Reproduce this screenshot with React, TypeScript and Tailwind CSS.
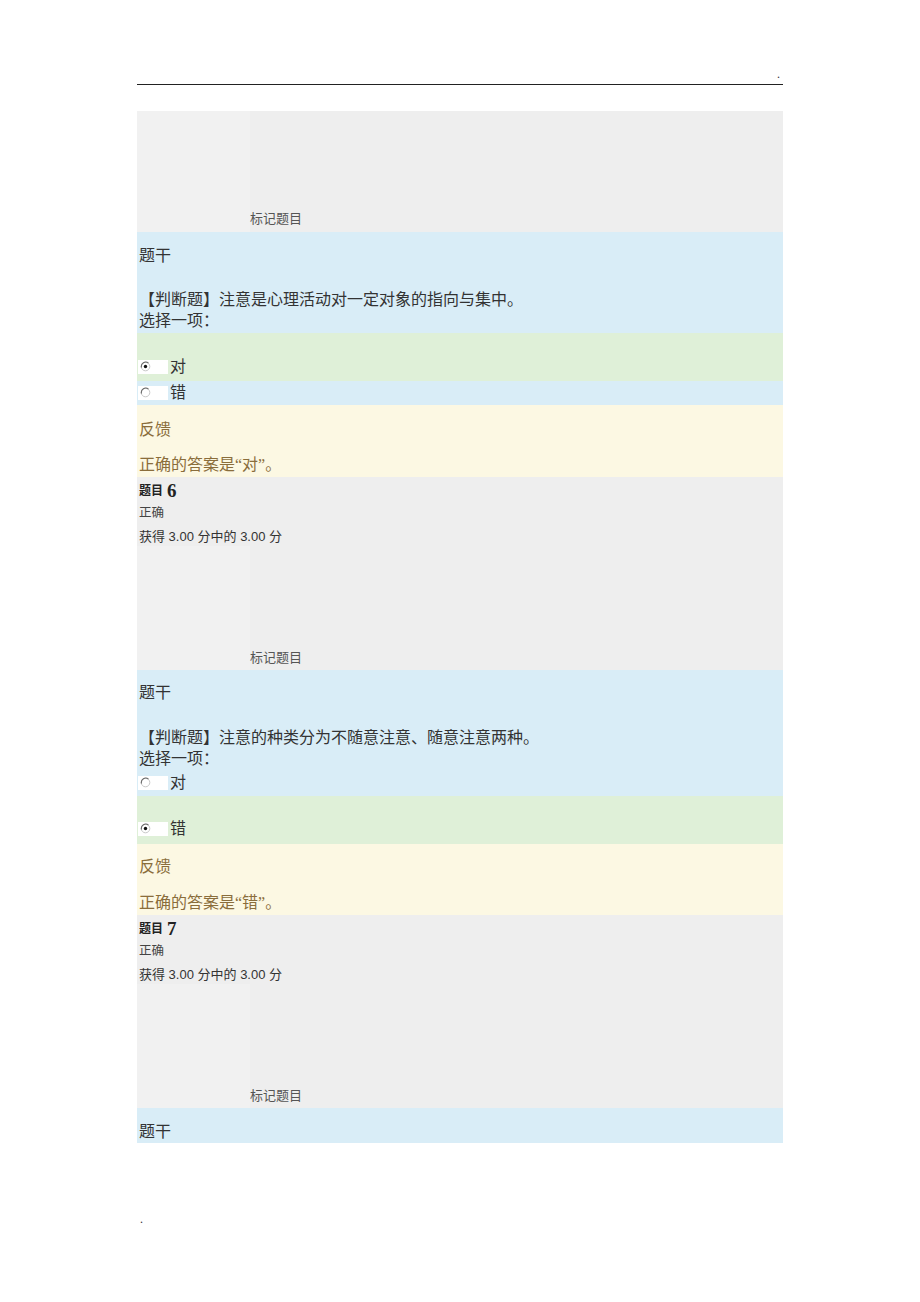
import React from "react";

const serif = "font-['Liberation_Serif','Noto_Sans_CJK_SC',serif]";
const sans = "font-['Liberation_Sans','Noto_Sans_CJK_SC',sans-serif]";

function Radio({ checked }: { checked?: boolean }) {
  return (
    <span className="inline-flex h-[14px] w-[30px] items-start bg-white pl-[2px] pt-[1px]">
      <svg width="11" height="11" viewBox="0 0 11 11">
        <circle cx="5.5" cy="5.5" r="4.3" fill="#fff" stroke="#c9c9c9" strokeWidth="1" />
        <path d="M1.5 6.5 A4.3 4.3 0 0 1 8.5 2.2" fill="none" stroke="#6b6b6b" strokeWidth="1.1" />
        {checked && <circle cx="5.5" cy="5.5" r="1.7" fill="#111" />}
      </svg>
    </span>
  );
}

function Option({ label, checked }: { label: string; checked?: boolean }) {
  return (
    <div className="flex h-[20px] items-center">
      <Radio checked={checked} />
      <span className="ml-[2px] text-[16px] leading-[20px] text-[#333]">{label}</span>
    </div>
  );
}

function MarkRow() {
  return (
    <div className="flex h-[124px]">
      <div className="w-[113px] bg-[#f1f1f1]" />
      <div className="flex flex-1 items-end pb-[4px]">
        <span className={`${sans} text-[13px] leading-[16px] text-[#555]`}>标记题目</span>
      </div>
    </div>
  );
}

function Info({ num }: { num: string }) {
  return (
    <div className="h-[69px] pl-[2px] pt-[4px]">
      <div className="flex h-[20px] items-center">
        <span className={`${sans} text-[12px] font-bold text-[#222]`}>题目</span>
        <span className={`${serif} ml-[4px] text-[19px] font-bold leading-[20px] text-[#222]`}>{num}</span>
      </div>
      <div className="mt-[3px] h-[18px] text-[12.5px] leading-[18px] text-[#444]">正确</div>
      <div className={`${sans} mt-[6px] h-[18px] text-[13px] leading-[18px] text-[#333]`}>
        获得 3.00 分中的 3.00 分
      </div>
    </div>
  );
}

export default function App() {
  return (
    <div className={`${serif} h-[1302px] w-[920px] bg-white`}>
      <div className="ml-[137px] w-[646px]">
        <div className="flex h-[85px] items-end justify-end border-b border-[#222] pb-[4px] pr-[3px]">
          <span className="text-[12px] leading-[12px] text-[#333]">.</span>
        </div>

        <div className="mt-[26px]">
          {/* 题目 5 (tail) */}
          <div className="flex h-[121px] bg-[#eeeeee]">
            <div className="w-[113px] bg-[#f1f1f1]" />
            <div className="flex flex-1 items-end pb-[5px]">
              <span className={`${sans} text-[13px] leading-[16px] text-[#555]`}>标记题目</span>
            </div>
          </div>

          <div className="h-[101px] bg-[#d9edf7] pl-[2px] pt-[14px] text-[16px] text-[#333]">
            <div className="h-[20px] leading-[20px]">题干</div>
            <div className="mt-[24px] h-[20px] leading-[20px]">
              【判断题】注意是心理活动对一定对象的指向与集中。
            </div>
            <div className="mt-[1px] h-[20px] leading-[20px]">选择一项：</div>
          </div>
          <div className="h-[48px] bg-[#dff0d8] pl-[1px] pt-[24px]">
            <Option label="对" checked />
          </div>
          <div className="h-[24px] bg-[#d9edf7] pl-[1px] pt-[2px]">
            <Option label="错" />
          </div>
          <div className="h-[72px] bg-[#fcf8e3] pl-[2px] pt-[15px] text-[16px] text-[#8a6d3b]">
            <div className="h-[20px] leading-[20px]">反馈</div>
            <div className="mt-[15px] h-[20px] leading-[20px]">正确的答案是“对”。</div>
          </div>

          {/* 题目 6 */}
          <div className="bg-[#eeeeee]">
            <Info num="6" />
            <MarkRow />
          </div>
          <div className="h-[102px] bg-[#d9edf7] pl-[2px] pt-[13px] text-[16px] text-[#333]">
            <div className="h-[20px] leading-[20px]">题干</div>
            <div className="mt-[25px] h-[20px] leading-[20px]">
              【判断题】注意的种类分为不随意注意、随意注意两种。
            </div>
            <div className="mt-[1px] h-[20px] leading-[20px]">选择一项：</div>
          </div>
          <div className="h-[24px] bg-[#d9edf7] pl-[1px] pt-[1px]">
            <Option label="对" />
          </div>
          <div className="h-[48px] bg-[#dff0d8] pl-[1px] pt-[23px]">
            <Option label="错" checked />
          </div>
          <div className="h-[71px] bg-[#fcf8e3] pl-[2px] pt-[13px] text-[16px] text-[#8a6d3b]">
            <div className="h-[20px] leading-[20px]">反馈</div>
            <div className="mt-[16px] h-[20px] leading-[20px]">正确的答案是“错”。</div>
          </div>

          {/* 题目 7 */}
          <div className="bg-[#eeeeee]">
            <Info num="7" />
            <MarkRow />
          </div>
          <div className="h-[35px] bg-[#d9edf7] pl-[2px] pt-[14px] text-[16px] text-[#333]">
            <div className="h-[20px] leading-[20px]">题干</div>
          </div>
        </div>

        <div className="mt-[68px] pl-[3px] text-[12px] leading-[16px] text-[#333]">.</div>
      </div>
    </div>
  );
}
